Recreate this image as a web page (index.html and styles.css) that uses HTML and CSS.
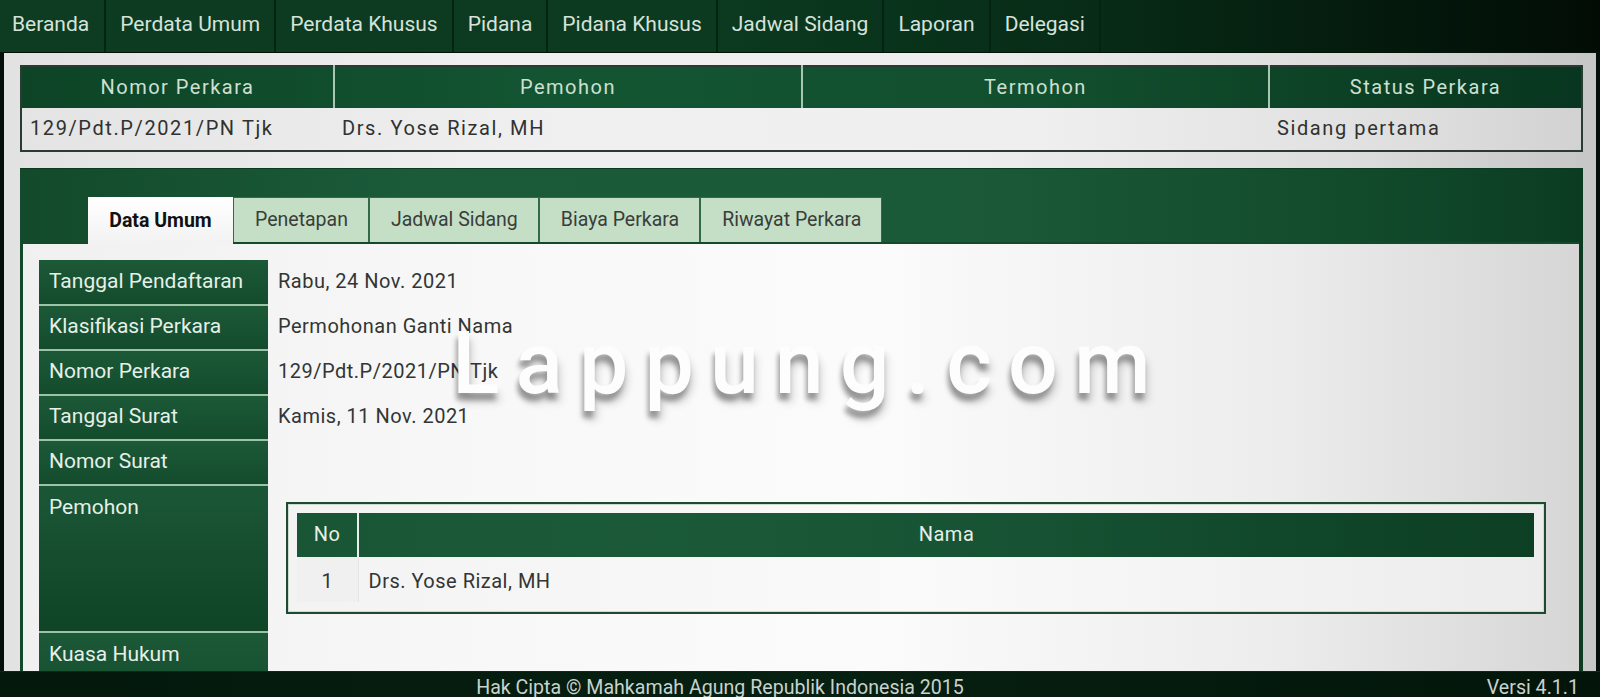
FILE: index.html
```html
<!DOCTYPE html>
<html lang="id">
<head>
<meta charset="utf-8">
<title>SIPP - Detail Perkara</title>
<link rel="stylesheet" href="styles.css">
</head>
<body>
<div class="page">
  <nav class="nav">
    <a class="nav-item">Beranda</a>
    <a class="nav-item">Perdata Umum</a>
    <a class="nav-item">Perdata Khusus</a>
    <a class="nav-item">Pidana</a>
    <a class="nav-item">Pidana Khusus</a>
    <a class="nav-item">Jadwal Sidang</a>
    <a class="nav-item">Laporan</a>
    <a class="nav-item">Delegasi</a>
  </nav>
  <main class="content">
    <table class="summary">
      <thead>
        <tr>
          <th class="sum-h c1">Nomor Perkara</th>
          <th class="sum-h c2">Pemohon</th>
          <th class="sum-h c3">Termohon</th>
          <th class="sum-h c4">Status Perkara</th>
        </tr>
      </thead>
      <tbody>
        <tr>
          <td class="sum-d">129/Pdt.P/2021/PN Tjk</td>
          <td class="sum-d">Drs. Yose Rizal, MH</td>
          <td class="sum-d"></td>
          <td class="sum-d">Sidang pertama</td>
        </tr>
      </tbody>
    </table>
    <section class="panel">
      <div class="tabs">
        <span class="tab active">Data Umum</span>
        <span class="tab">Penetapan</span>
        <span class="tab">Jadwal Sidang</span>
        <span class="tab">Biaya Perkara</span>
        <span class="tab">Riwayat Perkara</span>
      </div>
      <div class="tab-body">
        <table class="info">
          <tr><th class="lbl">Tanggal Pendaftaran</th><td class="val">Rabu, 24 Nov. 2021</td></tr>
          <tr><th class="lbl">Klasifikasi Perkara</th><td class="val">Permohonan Ganti Nama</td></tr>
          <tr><th class="lbl">Nomor Perkara</th><td class="val">129/Pdt.P/2021/PN Tjk</td></tr>
          <tr><th class="lbl">Tanggal Surat</th><td class="val">Kamis, 11 Nov. 2021</td></tr>
          <tr><th class="lbl">Nomor Surat</th><td class="val"></td></tr>
          <tr>
            <th class="lbl lbl-tall">Pemohon</th>
            <td class="val box-cell">
              <div class="party-box">
                <table class="party">
                  <thead><tr><th class="ph ph-no">No</th><th class="ph">Nama</th></tr></thead>
                  <tbody><tr><td class="pd pd-no">1</td><td class="pd pd-name">Drs. Yose Rizal, MH</td></tr></tbody>
                </table>
              </div>
            </td>
          </tr>
          <tr><th class="lbl lbl-last">Kuasa Hukum Pemohon</th><td class="val"></td></tr>
        </table>
      </div>
    </section>
  </main>
  <footer class="footer">
    <span class="copy">Hak Cipta © Mahkamah Agung Republik Indonesia 2015</span>
    <span class="version">Versi 4.1.1</span>
  </footer>
  <div class="watermark">Lappung.com</div>
</div>
</body>
</html>
```
FILE: styles.css
```css
* { box-sizing: border-box; }
html, body { margin: 0; padding: 0; }
body {
  font-family: Roboto, "Liberation Sans", Arial, sans-serif;
  background: #020c06;
  color: #333;
}
.page {
  position: relative;
  width: 1600px;
  height: 697px;
  overflow: hidden;
  display: flex;
  flex-direction: column;
  background: #050f09;
}

/* NAV */
.nav {
  height: 53px;
  flex: none;
  display: flex;
  background: linear-gradient(to right, #0d3c22 0%, #0b3a20 45%, #072a16 70%, #020c05 100%);
  border-bottom: 1px solid #021207;
}
.nav-item {
  display: flex;
  align-items: center;
  padding: 0 14px 4px 14px;
  font-size: 21px;
  color: #d6e2da;
  border-right: 2px solid #05240f;
  white-space: nowrap;
}
.nav-item:first-child { padding-left: 12px; padding-right: 15px; }

/* CONTENT */
.content {
  flex: 1;
  min-height: 0;
  overflow: hidden;
  margin: 0 4px;
  padding: 12px 13px 0 16px;
  background: linear-gradient(to right, #e2e2e2 0%, #efefef 30%, #eeeeee 60%, #dcdcdc 85%, #c6c6c6 100%);
}

.summary {
  width: 100%;
  border-collapse: collapse;
  border: 2px solid #2a3b31;
  table-layout: fixed;
  background: linear-gradient(to right, #e4e4e4 0%, #f0f0f0 35%, #efefef 65%, #dedede 90%, #d2d2d2 100%);
}
.sum-h {
  height: 42px;
  font-size: 20px;
  font-weight: normal;
  letter-spacing: 1.5px;
  color: #cde0d1;
  background: linear-gradient(to right, #0d4326 0%, #135532 35%, #124f2f 65%, #0c4024 85%, #083520 100%) fixed;
  border-left: 2px solid #a9c6b0;
  text-align: center;
  padding: 0 0 2px;
}
.sum-h.c1 { border-left: none; width: 313px; }
.sum-h.c2 { width: 468px; }
.sum-h.c3 { width: 467px; }
.sum-d {
  height: 43px;
  font-size: 20px;
  letter-spacing: 1.6px;
  color: #2f3230;
  padding: 0 8px 2px;
}

/* PANEL */
.panel {
  margin-top: 16px;
  height: 520px;
  padding: 28px 4px 0 3px;
  background: linear-gradient(to right, #124a2b 0%, #1b5b3a 25%, #1b5a39 60%, #124b2c 85%, #0b3c22 100%);
  border-top: 1px solid #0c3a20;
  display: flex;
  flex-direction: column;
}
.tabs {
  display: flex;
  padding-left: 65px;
  height: 47px;
  border-bottom: 2px solid #144a2c;
  flex: none;
}
.tab {
  display: flex;
  align-items: center;
  padding: 0 20px 2px 21px;
  font-size: 19.5px;
  color: #3a3d3b;
  background: #c4dfc6;
  border: 1px solid #2f6c47;
  border-bottom: none;
  white-space: nowrap;
}
.tab.active {
  background: linear-gradient(to bottom, #ffffff, #f2f2f2);
  color: #111;
  font-weight: bold;
  border: none;
  padding: 0;
  margin-bottom: -2px;
  width: 145px;
  justify-content: center;
}
.tab-body {
  flex: 1;
  padding: 16px 16px 0 16px;
  background: linear-gradient(to right, #f0f0f0 0%, #f8f8f8 30%, #fbfbfb 55%, #ededed 80%, #d6d6d6 100%);
  overflow: hidden;
}

.info {
  width: 100%;
  border-collapse: collapse;
}
.lbl {
  width: 229px;
  height: 45px;
  padding: 0 10px 3px;
  text-align: left;
  font-weight: normal;
  font-size: 21px;
  color: #e6efe8;
  background: linear-gradient(to bottom, #1c5937, #134c2d);
  border-bottom: 2px solid #9cc3a6;
  white-space: nowrap;
  vertical-align: middle;
}
.lbl-tall {
  height: 147px;
  vertical-align: top;
  padding-top: 9px;
  background: linear-gradient(to bottom, #1b5736, #0f4427);
}
.lbl-last {
  vertical-align: top;
  padding-top: 8px;
  white-space: normal;
  line-height: 27px;
  height: 80px;
  border-bottom: none;
}
.val {
  padding: 0 10px 3px;
  font-size: 20px;
  letter-spacing: 0.5px;
  color: #333534;
  vertical-align: middle;
}
.box-cell { padding: 0; vertical-align: top; }

.party-box {
  margin: 17px 17px 18px 18px;
  border: 2px solid #1f4a31;
  box-shadow: inset 0 0 0 1px #c9dccd;
  padding: 9px 10px 10px 9px;
  background: linear-gradient(to right, #f3f3f3, #fafafa 50%, #ececec);
}
.party {
  width: 100%;
  border-collapse: collapse;
}
.ph {
  height: 44px;
  font-size: 20px;
  font-weight: normal;
  color: #e6efe8;
  background: linear-gradient(to right, #175232 0%, #1b5a39 40%, #165233 65%, #0f4428 85%, #0c3d22 100%) fixed;
  text-align: center;
  padding: 0 0 2px;
  border-left: 2px solid #e8efe9;
}
.ph-no { width: 61px; border-left: none; }
.pd {
  height: 45px;
  font-size: 20px;
  letter-spacing: 0.5px;
  color: #333534;
  padding: 2px 10px 0;
  border-left: 1px solid #e4e4e4;
}
.pd-no { text-align: center; border-left: none; background: #f0f0f0; }

/* FOOTER */
.footer {
  flex: none;
  height: 26px;
  display: grid;
  grid-template-columns: 1440px 1fr;
  align-items: start;
  padding-top: 4px;
  background: linear-gradient(to right, #04180c 0%, #062011 50%, #03150a 100%);
  border-top: 1px solid #0d2a18;
  font-size: 19.6px;
  color: #c9d2cd;
  line-height: 24px;
  overflow: hidden;
}
.copy { text-align: center; }
.version { text-align: right; padding-right: 21px; }

/* WATERMARK */
.watermark {
  position: absolute;
  left: 452px;
  top: 319px;
  font-family: Roboto, "Liberation Sans", Arial, sans-serif;
  font-size: 88px;
  font-weight: 500;
  line-height: 1;
  letter-spacing: 16px;
  color: #fdfdfd;
  text-shadow: -2px 7px 5px rgba(0, 0, 0, 0.32), 2px 9px 8px rgba(0, 0, 0, 0.18);
  pointer-events: none;
  white-space: nowrap;
}
```
